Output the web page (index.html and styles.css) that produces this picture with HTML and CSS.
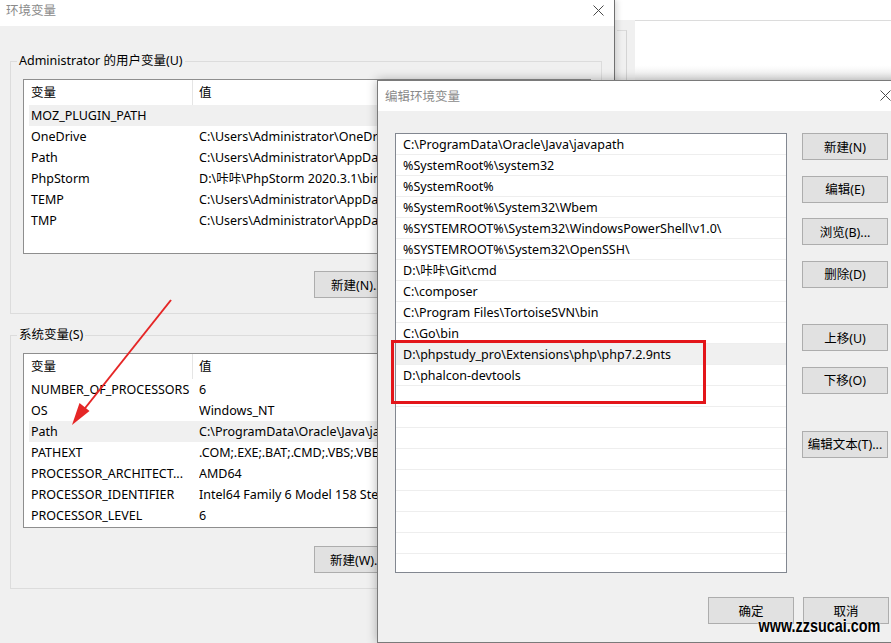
FILE: index.html
```html
<!DOCTYPE html>
<html>
  <head>
    <title>环境变量</title>
    <meta charset="UTF-8" />
    <link rel="stylesheet" href="styles.css">
  </head>
  <body>
    <div class="desk">
      <div class="back-win">
        <div class="back-bar"></div>
        <div class="back-body">
          <div class="back-strip"><div class="back-strip-box"></div></div>
          <div class="back-pane"></div>
        </div>
      </div>

      <div class="env-win">
        <div class="titlebar">
          <span class="title">环境变量</span>
          <svg class="close" viewBox="0 0 11 11"><path d="M0.5 0.5L10.5 10.5M10.5 0.5L0.5 10.5" /></svg>
        </div>
        <div class="env-body">
          <fieldset class="group">
            <legend>Administrator 的用户变量(U)</legend>
            <div class="varlist">
              <div class="var-head"><span class="col-name">变量</span><span class="col-val">值</span></div>
              <div class="var-row selected"><span class="col-name">MOZ_PLUGIN_PATH</span><span class="col-val"></span></div>
              <div class="var-row"><span class="col-name">OneDrive</span><span class="col-val">C:\Users\Administrator\OneDrive</span></div>
              <div class="var-row"><span class="col-name">Path</span><span class="col-val">C:\Users\Administrator\AppData\Local\Microsoft\WindowsApps;</span></div>
              <div class="var-row"><span class="col-name">PhpStorm</span><span class="col-val">D:\咔咔\PhpStorm 2020.3.1\bin;</span></div>
              <div class="var-row"><span class="col-name">TEMP</span><span class="col-val">C:\Users\Administrator\AppData\Local\Temp</span></div>
              <div class="var-row"><span class="col-name">TMP</span><span class="col-val">C:\Users\Administrator\AppData\Local\Temp</span></div>
            </div>
            <div class="group-actions">
              <button class="btn">新建(N)...</button>
            </div>
          </fieldset>

          <fieldset class="group sys-group">
            <legend>系统变量(S)</legend>
            <div class="varlist">
              <div class="var-head"><span class="col-name">变量</span><span class="col-val">值</span></div>
              <div class="var-row"><span class="col-name">NUMBER_OF_PROCESSORS</span><span class="col-val">6</span></div>
              <div class="var-row"><span class="col-name">OS</span><span class="col-val">Windows_NT</span></div>
              <div class="var-row selected"><span class="col-name">Path</span><span class="col-val">C:\ProgramData\Oracle\Java\javapath;%SystemRoot%\system32</span></div>
              <div class="var-row"><span class="col-name">PATHEXT</span><span class="col-val">.COM;.EXE;.BAT;.CMD;.VBS;.VBE;.JS;.JSE;.WSF;.WSH;.MSC</span></div>
              <div class="var-row"><span class="col-name">PROCESSOR_ARCHITECT...</span><span class="col-val">AMD64</span></div>
              <div class="var-row"><span class="col-name">PROCESSOR_IDENTIFIER</span><span class="col-val">Intel64 Family 6 Model 158 Stepping 10, GenuineIntel</span></div>
              <div class="var-row"><span class="col-name">PROCESSOR_LEVEL</span><span class="col-val">6</span></div>
            </div>
            <div class="group-actions">
              <button class="btn">新建(W)...</button>
            </div>
          </fieldset>
        </div>
      </div>

      <div class="edit-win">
        <div class="titlebar">
          <span class="title">编辑环境变量</span>
          <svg class="close" viewBox="0 0 11 11"><path d="M0.5 0.5L10.5 10.5M10.5 0.5L0.5 10.5" /></svg>
        </div>
        <div class="edit-body">
          <div class="path-list">
            <div class="path-row">C:\ProgramData\Oracle\Java\javapath</div>
            <div class="path-row">%SystemRoot%\system32</div>
            <div class="path-row">%SystemRoot%</div>
            <div class="path-row">%SystemRoot%\System32\Wbem</div>
            <div class="path-row">%SYSTEMROOT%\System32\WindowsPowerShell\v1.0\</div>
            <div class="path-row">%SYSTEMROOT%\System32\OpenSSH\</div>
            <div class="path-row">D:\咔咔\Git\cmd</div>
            <div class="path-row">C:\composer</div>
            <div class="path-row">C:\Program Files\TortoiseSVN\bin</div>
            <div class="path-row">C:\Go\bin</div>
            <div class="path-row selected">D:\phpstudy_pro\Extensions\php\php7.2.9nts</div>
            <div class="path-row">D:\phalcon-devtools</div>
            <div class="path-row"></div>
            <div class="path-row"></div>
            <div class="path-row"></div>
            <div class="path-row"></div>
            <div class="path-row"></div>
            <div class="path-row"></div>
            <div class="path-row"></div>
            <div class="path-row"></div>
            <div class="path-row"></div>
          </div>
          <div class="side-buttons">
            <button class="btn">新建(N)</button>
            <button class="btn">编辑(E)</button>
            <button class="btn">浏览(B)...</button>
            <button class="btn">删除(D)</button>
            <button class="btn spaced">上移(U)</button>
            <button class="btn">下移(O)</button>
            <button class="btn spaced">编辑文本(T)...</button>
          </div>
        </div>
        <div class="edit-foot">
          <button class="btn">确定</button>
          <button class="btn">取消</button>
        </div>
      </div>

      <div class="mark-box"></div>

      <svg class="arrow" viewBox="0 0 891 643">
        <path class="arrow-line" d="M171 300L82 412" />
        <path class="arrow-head" d="M72 425L79.5 403L89.5 411Z" />
      </svg>

      <div class="watermark">www.zzsucai.com</div>
    </div>
  </body>
</html>
```

FILE: styles.css
```css
* {
  box-sizing: border-box;
}

body {
  margin: 0;
  background: #fff;
  font-family: "Noto Sans", "Noto Sans CJK SC", sans-serif;
  font-size: 12.5px;
  color: #000;
}

.desk {
  position: relative;
  width: 891px;
  height: 643px;
  overflow: hidden;
  background: #fff;
}

/* window behind, top right */
.back-win {
  position: absolute;
  left: 615px;
  top: 0;
  width: 276px;
  height: 80px;
  background: #fff;
  display: flex;
  flex-direction: column;
}
.back-bar {
  height: 20px;
}
.back-body {
  flex: 1;
  display: flex;
}
.back-strip {
  width: 20px;
  background: #f0f0f0;
  padding: 10px 0 0 2px;
}
.back-strip-box {
  width: 10px;
  height: 100%;
  border-top: 1px solid #dadada;
  border-right: 1px solid #d4d4d4;
}
.back-pane {
  flex: 1;
  border-top: 1px solid #dcdcdc;
  background: linear-gradient(#fff 75%, #ebebeb);
}

/* shared window parts */
.titlebar {
  background: #fff;
  display: flex;
  justify-content: space-between;
  align-items: flex-start;
}
.title {
  color: #8a8a8a;
  line-height: 16px;
}
.close {
  width: 11px;
  height: 11px;
  margin-top: 2px;
  fill: none;
  stroke: #4a4a4a;
  stroke-width: 1;
}

.btn {
  width: 86px;
  height: 27px;
  padding: 0 0 1px;
  background: #e1e1e1;
  border: 1px solid #adadad;
  font: inherit;
  color: #000;
  white-space: nowrap;
}

/* 环境变量 */
.env-win {
  position: absolute;
  left: 0;
  top: 0;
  width: 615px;
  height: 643px;
  background: #f0f0f0;
  border-right: 1px solid #707070;
  box-shadow: 2px 0 6px rgba(0, 0, 0, 0.15);
}
.env-win .titlebar {
  height: 26px;
  padding: 3px 10px 0 6px;
}
.env-body {
  padding: 27px 12px 0 10px;
}

.group {
  margin: 0;
  min-width: 0;
  border: 1px solid #dcdcdc;
  padding: 10px 10px 15px 12px;
}
.group legend {
  margin-left: -6px;
  padding: 0 2px;
  line-height: 16px;
}
.sys-group {
  margin-top: 13px;
}
.sys-group .group-actions {
  margin-top: 18px;
}

.varlist {
  height: 175px;
  background: #fff;
  border: 1px solid #8e8e8e;
  overflow: hidden;
}
.var-head {
  display: grid;
  grid-template-columns: 169px 1fr;
  height: 25px;
  line-height: 25px;
}
.var-head .col-name {
  padding-left: 7px;
  border-right: 1px solid #e5e5e5;
}
.var-head .col-val {
  padding-left: 6px;
}
.var-row {
  display: grid;
  grid-template-columns: 170px 1fr;
  height: 21px;
  line-height: 21px;
  margin-left: 5px;
  white-space: nowrap;
}
.var-row .col-name {
  padding-left: 2px;
  overflow: hidden;
}
.var-row .col-val {
  overflow: hidden;
}
.var-row.selected {
  background: #f0f0f0;
}

/* the other two buttons of each row lie under the edit dialog */
.group-actions {
  display: flex;
  justify-content: flex-start;
  margin-top: 17px;
  padding-left: 291px;
}

/* 编辑环境变量 */
.edit-win {
  position: absolute;
  left: 377px;
  top: 80px;
  width: 531px;
  height: 563px;
  background: #f0f0f0;
  border: 1px solid #7a7a7a;
  box-shadow: 0 0 10px rgba(0, 0, 0, 0.3);
}
.edit-win .titlebar {
  height: 30px;
  padding: 8px 16px 0 7px;
}
.edit-win .close {
  margin-top: 1px;
}

.edit-body {
  display: flex;
  gap: 15px;
  padding: 22px 0 0 17px;
}
.path-list {
  width: 392px;
  height: 440px;
  background: #fff;
  border: 1px solid #828790;
  overflow: hidden;
}
.path-row {
  height: 21px;
  line-height: 19px;
  padding: 1px 0 0 7px;
  border-bottom: 1px solid #eeeeee;
  white-space: nowrap;
}
.path-row.selected {
  background: #f0f0f0;
}

.side-buttons {
  display: flex;
  flex-direction: column;
  gap: 15.6px;
  width: 86px;
}
.side-buttons .spaced {
  margin-top: 21px;
}

.edit-foot {
  display: flex;
  justify-content: flex-end;
  gap: 9px;
  margin-top: 24px;
  padding-right: 18px;
}

/* annotations */
.mark-box {
  position: absolute;
  left: 391px;
  top: 340px;
  width: 315px;
  height: 64px;
  border: 3px solid #e3151a;
}

.arrow {
  position: absolute;
  left: 0;
  top: 0;
  width: 891px;
  height: 643px;
  pointer-events: none;
}
.arrow-line {
  fill: none;
  stroke: #e52626;
  stroke-width: 2;
}
.arrow-head {
  fill: #e52626;
}

.watermark {
  position: absolute;
  right: 11px;
  top: 616px;
  font-family: "Liberation Sans", Arial, sans-serif;
  font-weight: bold;
  font-size: 18px;
  line-height: 20px;
  color: #000;
  transform: scaleX(0.8);
  transform-origin: right center;
  text-shadow: 0 0 2px #fff, 0 0 2px #fff;
}
```
